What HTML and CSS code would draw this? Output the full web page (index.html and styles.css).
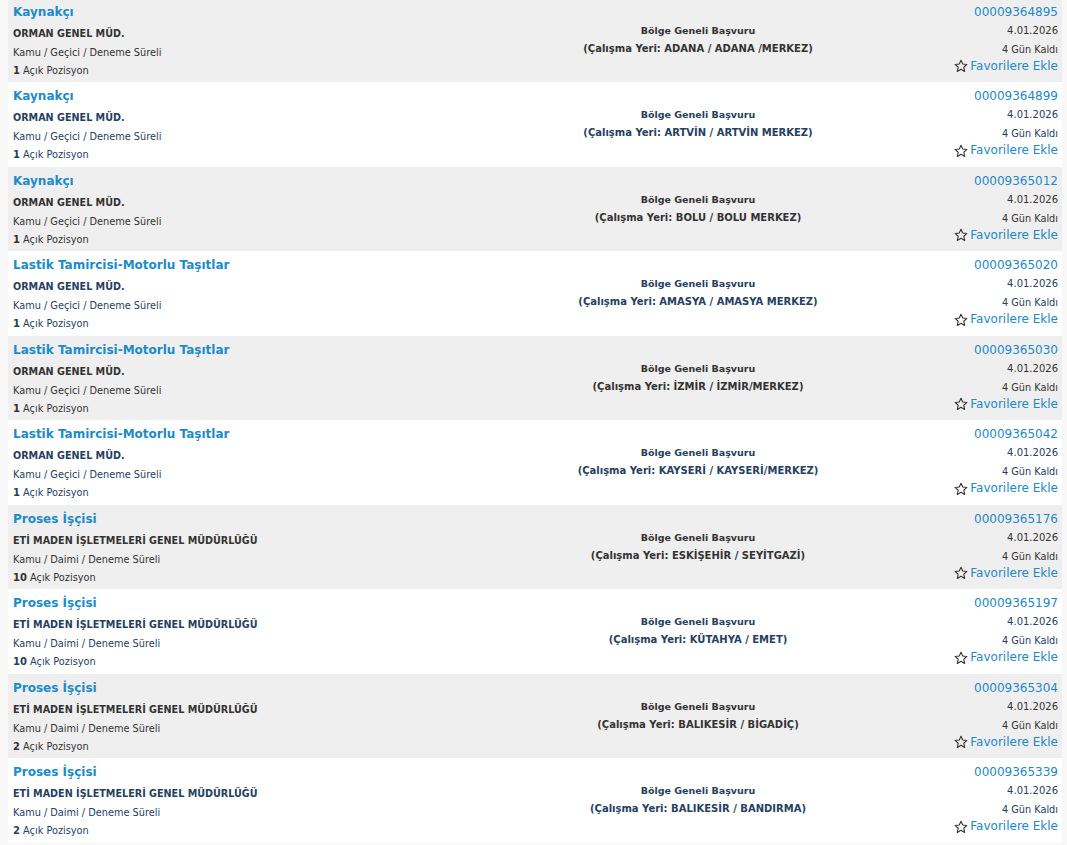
FILE: index.html
```html
<!DOCTYPE html>
<html lang="tr">
<head>
<meta charset="utf-8">
<title>İlanlar</title>
<link rel="stylesheet" href="styles.css">
</head>
<body>
<svg width="0" height="0" class="defs" aria-hidden="true">
  <defs>
    <symbol id="star" viewBox="0 0 14 14">
      <path d="M7 1.2 L8.75 5.05 L12.9 5.45 L9.8 8.25 L10.7 12.4 L7 10.25 L3.3 12.4 L4.2 8.25 L1.1 5.45 L5.25 5.05 Z" fill="none" stroke="currentColor" stroke-width="1.1" stroke-linejoin="round"/>
    </symbol>
  </defs>
</svg>
<div class="list">
  <div class="row">
    <div class="col-left">
      <a class="title">Kaynakçı</a>
      <div class="company">ORMAN GENEL MÜD.</div>
      <div class="type">Kamu / Geçici / Deneme Süreli</div>
      <div class="pos"><b>1</b> Açık Pozisyon</div>
    </div>
    <div class="col-mid">
      <div class="mid-line">Bölge Geneli Başvuru</div>
      <div class="mid-line place">(Çalışma Yeri: ADANA / ADANA /MERKEZ)</div>
    </div>
    <div class="col-right">
      <a class="num">00009364895</a>
      <div class="date">4.01.2026</div>
      <div class="left">4 Gün Kaldı</div>
      <a class="fav"><svg class="star"><use href="#star"/></svg>Favorilere Ekle</a>
    </div>
  </div>
  <div class="row">
    <div class="col-left">
      <a class="title">Kaynakçı</a>
      <div class="company">ORMAN GENEL MÜD.</div>
      <div class="type">Kamu / Geçici / Deneme Süreli</div>
      <div class="pos"><b>1</b> Açık Pozisyon</div>
    </div>
    <div class="col-mid">
      <div class="mid-line">Bölge Geneli Başvuru</div>
      <div class="mid-line place">(Çalışma Yeri: ARTVİN / ARTVİN MERKEZ)</div>
    </div>
    <div class="col-right">
      <a class="num">00009364899</a>
      <div class="date">4.01.2026</div>
      <div class="left">4 Gün Kaldı</div>
      <a class="fav"><svg class="star"><use href="#star"/></svg>Favorilere Ekle</a>
    </div>
  </div>
  <div class="row">
    <div class="col-left">
      <a class="title">Kaynakçı</a>
      <div class="company">ORMAN GENEL MÜD.</div>
      <div class="type">Kamu / Geçici / Deneme Süreli</div>
      <div class="pos"><b>1</b> Açık Pozisyon</div>
    </div>
    <div class="col-mid">
      <div class="mid-line">Bölge Geneli Başvuru</div>
      <div class="mid-line place">(Çalışma Yeri: BOLU / BOLU MERKEZ)</div>
    </div>
    <div class="col-right">
      <a class="num">00009365012</a>
      <div class="date">4.01.2026</div>
      <div class="left">4 Gün Kaldı</div>
      <a class="fav"><svg class="star"><use href="#star"/></svg>Favorilere Ekle</a>
    </div>
  </div>
  <div class="row">
    <div class="col-left">
      <a class="title">Lastik Tamircisi-Motorlu Taşıtlar</a>
      <div class="company">ORMAN GENEL MÜD.</div>
      <div class="type">Kamu / Geçici / Deneme Süreli</div>
      <div class="pos"><b>1</b> Açık Pozisyon</div>
    </div>
    <div class="col-mid">
      <div class="mid-line">Bölge Geneli Başvuru</div>
      <div class="mid-line place">(Çalışma Yeri: AMASYA / AMASYA MERKEZ)</div>
    </div>
    <div class="col-right">
      <a class="num">00009365020</a>
      <div class="date">4.01.2026</div>
      <div class="left">4 Gün Kaldı</div>
      <a class="fav"><svg class="star"><use href="#star"/></svg>Favorilere Ekle</a>
    </div>
  </div>
  <div class="row">
    <div class="col-left">
      <a class="title">Lastik Tamircisi-Motorlu Taşıtlar</a>
      <div class="company">ORMAN GENEL MÜD.</div>
      <div class="type">Kamu / Geçici / Deneme Süreli</div>
      <div class="pos"><b>1</b> Açık Pozisyon</div>
    </div>
    <div class="col-mid">
      <div class="mid-line">Bölge Geneli Başvuru</div>
      <div class="mid-line place">(Çalışma Yeri: İZMİR / İZMİR/MERKEZ)</div>
    </div>
    <div class="col-right">
      <a class="num">00009365030</a>
      <div class="date">4.01.2026</div>
      <div class="left">4 Gün Kaldı</div>
      <a class="fav"><svg class="star"><use href="#star"/></svg>Favorilere Ekle</a>
    </div>
  </div>
  <div class="row">
    <div class="col-left">
      <a class="title">Lastik Tamircisi-Motorlu Taşıtlar</a>
      <div class="company">ORMAN GENEL MÜD.</div>
      <div class="type">Kamu / Geçici / Deneme Süreli</div>
      <div class="pos"><b>1</b> Açık Pozisyon</div>
    </div>
    <div class="col-mid">
      <div class="mid-line">Bölge Geneli Başvuru</div>
      <div class="mid-line place">(Çalışma Yeri: KAYSERİ / KAYSERİ/MERKEZ)</div>
    </div>
    <div class="col-right">
      <a class="num">00009365042</a>
      <div class="date">4.01.2026</div>
      <div class="left">4 Gün Kaldı</div>
      <a class="fav"><svg class="star"><use href="#star"/></svg>Favorilere Ekle</a>
    </div>
  </div>
  <div class="row">
    <div class="col-left">
      <a class="title">Proses İşçisi</a>
      <div class="company">ETİ MADEN İŞLETMELERİ GENEL MÜDÜRLÜĞÜ</div>
      <div class="type">Kamu / Daimi / Deneme Süreli</div>
      <div class="pos"><b>10</b> Açık Pozisyon</div>
    </div>
    <div class="col-mid">
      <div class="mid-line">Bölge Geneli Başvuru</div>
      <div class="mid-line place">(Çalışma Yeri: ESKİŞEHİR / SEYİTGAZİ)</div>
    </div>
    <div class="col-right">
      <a class="num">00009365176</a>
      <div class="date">4.01.2026</div>
      <div class="left">4 Gün Kaldı</div>
      <a class="fav"><svg class="star"><use href="#star"/></svg>Favorilere Ekle</a>
    </div>
  </div>
  <div class="row">
    <div class="col-left">
      <a class="title">Proses İşçisi</a>
      <div class="company">ETİ MADEN İŞLETMELERİ GENEL MÜDÜRLÜĞÜ</div>
      <div class="type">Kamu / Daimi / Deneme Süreli</div>
      <div class="pos"><b>10</b> Açık Pozisyon</div>
    </div>
    <div class="col-mid">
      <div class="mid-line">Bölge Geneli Başvuru</div>
      <div class="mid-line place">(Çalışma Yeri: KÜTAHYA / EMET)</div>
    </div>
    <div class="col-right">
      <a class="num">00009365197</a>
      <div class="date">4.01.2026</div>
      <div class="left">4 Gün Kaldı</div>
      <a class="fav"><svg class="star"><use href="#star"/></svg>Favorilere Ekle</a>
    </div>
  </div>
  <div class="row">
    <div class="col-left">
      <a class="title">Proses İşçisi</a>
      <div class="company">ETİ MADEN İŞLETMELERİ GENEL MÜDÜRLÜĞÜ</div>
      <div class="type">Kamu / Daimi / Deneme Süreli</div>
      <div class="pos"><b>2</b> Açık Pozisyon</div>
    </div>
    <div class="col-mid">
      <div class="mid-line">Bölge Geneli Başvuru</div>
      <div class="mid-line place">(Çalışma Yeri: BALIKESİR / BİGADİÇ)</div>
    </div>
    <div class="col-right">
      <a class="num">00009365304</a>
      <div class="date">4.01.2026</div>
      <div class="left">4 Gün Kaldı</div>
      <a class="fav"><svg class="star"><use href="#star"/></svg>Favorilere Ekle</a>
    </div>
  </div>
  <div class="row">
    <div class="col-left">
      <a class="title">Proses İşçisi</a>
      <div class="company">ETİ MADEN İŞLETMELERİ GENEL MÜDÜRLÜĞÜ</div>
      <div class="type">Kamu / Daimi / Deneme Süreli</div>
      <div class="pos"><b>2</b> Açık Pozisyon</div>
    </div>
    <div class="col-mid">
      <div class="mid-line">Bölge Geneli Başvuru</div>
      <div class="mid-line place">(Çalışma Yeri: BALIKESİR / BANDIRMA)</div>
    </div>
    <div class="col-right">
      <a class="num">00009365339</a>
      <div class="date">4.01.2026</div>
      <div class="left">4 Gün Kaldı</div>
      <a class="fav"><svg class="star"><use href="#star"/></svg>Favorilere Ekle</a>
    </div>
  </div>
</div>
</body>
</html>
```

FILE: styles.css
```css
html, body {
  margin: 0;
  padding: 0;
}
body {
  background: #f8f8f8;
  font-family: "DejaVu Sans", Verdana, sans-serif;
  color: #333333;
  overflow: hidden;
}
.defs {
  position: absolute;
  width: 0;
  height: 0;
}
.list {
  margin: -2.5px 5px 0 8px;
  display: flex;
  flex-direction: column;
}
.row {
  height: 84.5px;
  box-sizing: border-box;
  display: grid;
  grid-template-columns: 1fr 300px 210px;
  padding: 5px 4px 0 5px;
  background: #efefef;
  color: #333333;
}
.row:nth-child(even) {
  background: #ffffff;
  color: #26405f;
}
.col-left {
  display: flex;
  flex-direction: column;
  align-items: flex-start;
}
.title {
  font-size: 12px;
  font-weight: bold;
  line-height: 18px;
  color: #1b8bc9;
}
.company {
  font-size: 9.65px;
  font-weight: bold;
  line-height: 20px;
  margin-top: 3px;
}
.type {
  font-size: 9.75px;
  line-height: 18px;
}
.pos {
  font-size: 9.75px;
  line-height: 18px;
}
.pos b {
  font-size: 10px;
}
.col-mid {
  display: flex;
  flex-direction: column;
  align-items: center;
  padding-top: 19px;
}
.mid-line {
  font-size: 9.5px;
  font-weight: bold;
  line-height: 18px;
}
.mid-line.place {
  font-size: 10px;
}
.col-right {
  display: flex;
  flex-direction: column;
  align-items: flex-end;
}
.num {
  font-size: 12px;
  line-height: 18px;
  color: #2289c8;
}
.date {
  font-size: 10px;
  line-height: 20px;
}
.left {
  font-size: 9.75px;
  line-height: 17px;
}
.fav {
  font-size: 12px;
  line-height: 17px;
  color: #2289c8;
  display: flex;
  align-items: center;
}
.star {
  width: 14px;
  height: 14px;
  color: #333333;
  margin-right: 2px;
}
```
